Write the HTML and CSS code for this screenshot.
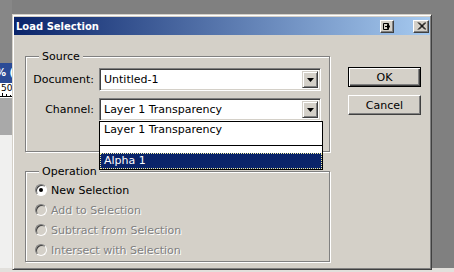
FILE: index.html
```html
<!DOCTYPE html>
<html lang="en">
<head>
    <meta charset="UTF-8">
    <title>Load Selection</title>
    <link rel="stylesheet" href="styles.css">
</head>
<body>
  <div class="screen">
    <div class="behind">
      <div class="behind-top"></div>
      <div class="behind-title">% (</div>
      <div class="behind-ruler">
        <span>50</span>
        <svg class="ticks" width="12" height="4" viewBox="0 0 12 4"><path d="M0 3.5H12M2.5 0V4M6.5 1V4M10.5 2V4" stroke="#000" stroke-width="1" fill="none"/></svg>
      </div>
      <div class="behind-panel"></div>
      <div class="behind-canvas"></div>
    </div>

    <div class="dialog">
      <div class="titlebar">
        <span class="title">Load Selection</span>
        <span class="tb-btn tb-dock">
          <svg width="8" height="7" viewBox="0 0 8 7"><path d="M0.5 0.5H5.5V6.5H0.5Z" fill="none" stroke="#000"/><path d="M2 3.5H6M4.5 1.5L7 3.5L4.5 5.5Z" stroke="#000" fill="#000"/></svg>
        </span>
        <span class="tb-btn tb-close">
          <svg width="9" height="8" viewBox="0 0 9 8"><path d="M1 0.5L8 7.5M8 0.5L1 7.5M2 0.5L9 7.5M9 0.5L2 7.5" stroke="#000" stroke-width="1"/></svg>
        </span>
      </div>

      <div class="dialog-body">
        <div class="groups">
          <fieldset class="group group-source">
            <legend>Source</legend>
            <div class="field-grid">
              <label>Document:</label>
              <div class="select">
                <span class="select-value">Untitled-1</span>
                <span class="select-arrow"><svg width="7" height="4" viewBox="0 0 7 4"><path d="M0 0H7L3.5 4Z" fill="#000"/></svg></span>
              </div>
              <label>Channel:</label>
              <div class="select">
                <span class="select-value">Layer 1 Transparency</span>
                <span class="select-arrow"><svg width="7" height="4" viewBox="0 0 7 4"><path d="M0 0H7L3.5 4Z" fill="#000"/></svg></span>
                <ul class="dropdown">
                  <li class="option">Layer 1 Transparency</li>
                  <li class="option-sep"></li>
                  <li class="option-gap"></li>
                  <li class="option selected">Alpha 1</li>
                </ul>
              </div>
            </div>
          </fieldset>

          <fieldset class="group group-operation">
            <legend>Operation</legend>
            <div class="radios">
              <div class="radio checked"><span class="radio-dot"></span>New Selection</div>
              <div class="radio disabled"><span class="radio-dot"></span>Add to Selection</div>
              <div class="radio disabled"><span class="radio-dot"></span>Subtract from Selection</div>
              <div class="radio disabled"><span class="radio-dot"></span>Intersect with Selection</div>
            </div>
          </fieldset>
        </div>

        <div class="buttons">
          <button class="btn btn-default">OK</button>
          <button class="btn">Cancel</button>
        </div>
      </div>
    </div>

    <div class="outside"></div>
  </div>
  <div class="strip"></div>
</body>
</html>
```

FILE: styles.css
```css
html, body {
  margin: 0;
  width: 454px;
  height: 272px;
  overflow: hidden;
}

body {
  background: #808080;
  font-family: "DejaVu Sans", Verdana, sans-serif;
  font-size: 11px;
  color: #000;
}

.screen {
  display: flex;
  height: 268px;
}

/* window behind the dialog, left edge */
.behind {
  width: 12px;
  display: flex;
  flex-direction: column;
  overflow: hidden;
}

.behind-top {
  height: 63px;
  background: #878787;
}

.behind-title {
  height: 20px;
  line-height: 20px;
  background: #2b4b96;
  color: #fff;
  font-weight: bold;
  font-size: 10px;
  white-space: nowrap;
  text-indent: -4px;
}

.behind-ruler {
  height: 15px;
  background: #fff;
  font-size: 9px;
  line-height: 10px;
  display: flex;
  flex-direction: column;
  padding-left: 1px;
}

.ticks {
  display: block;
  margin-left: -1px;
}

.behind-panel {
  height: 37px;
  background: #a9a9a9;
}

.behind-canvas {
  flex: 1;
  background: #f0f0ef;
}

/* dialog */
.dialog {
  margin-top: 14px;
  width: 416px;
  height: 251px;
  padding: 2px 1px 1px;
  background: #d4d0c8;
  border: 1px solid;
  border-color: #d4d0c8 #404040 #404040 #d4d0c8;
  box-shadow: inset 1px 1px #fff, inset -1px -1px #808080;
}

.titlebar {
  height: 18px;
  display: flex;
  align-items: center;
  background: linear-gradient(to right, #0a246a, #a6caf0);
  padding: 0 1px 0 1px;
}

.title {
  flex: 1;
  color: #fff;
  font-weight: bold;
  font-size: 10px;
  padding-left: 1px;
}

.tb-btn {
  height: 13px;
  box-sizing: border-box;
  display: flex;
  align-items: center;
  justify-content: center;
  background: #d4d0c8;
  border: 1px solid;
  border-color: #fff #404040 #404040 #fff;
  box-shadow: inset -1px -1px #808080;
}

.tb-dock {
  width: 14px;
  margin-right: 19px;
}

.tb-close {
  width: 16px;
}

.dialog-body {
  display: flex;
  gap: 18px;
  padding: 15px 9px 0 11px;
}

.groups {
  width: 305px;
}

.group {
  margin: 0;
  padding: 0;
  border: 1px solid #808080;
  box-shadow: inset 1px 1px #fff, 1px 1px #fff;
  min-width: 0;
}

.group legend {
  margin-left: 13px;
  padding: 0 3px;
  line-height: 13px;
  background: #d4d0c8;
}

.field-grid {
  display: grid;
  grid-template-columns: 68px 222px;
  column-gap: 5px;
  row-gap: 7px;
  align-items: center;
  padding: 5px 0 30px;
}

.field-grid label {
  text-align: right;
}

.select {
  position: relative;
  height: 23px;
  box-sizing: border-box;
  display: flex;
  align-items: center;
  background: #fff;
  border: 1px solid;
  border-color: #808080 #fff #fff #808080;
  box-shadow: inset 1px 1px #404040, inset -1px -1px #d4d0c8;
  padding: 2px 2px 2px 4px;
}

.select-value {
  flex: 1;
}

.select-arrow {
  width: 16px;
  align-self: stretch;
  box-sizing: border-box;
  display: flex;
  align-items: center;
  justify-content: center;
  background: #d4d0c8;
  border: 1px solid;
  border-color: #d4d0c8 #404040 #404040 #d4d0c8;
  box-shadow: inset 1px 1px #fff, inset -1px -1px #808080;
}

.select-arrow svg {
  display: block;
}

.dropdown {
  position: absolute;
  left: -1px;
  top: calc(100% + 1px);
  width: 224px;
  box-sizing: border-box;
  margin: 0;
  padding: 0;
  list-style: none;
  background: #fff;
  border: 1px solid #000;
  z-index: 2;
}

.option {
  height: 16px;
  line-height: 16px;
  padding-left: 4px;
}

.option-sep {
  height: 7px;
  border-bottom: 1px solid #000;
}

.option-gap {
  height: 7px;
}

.option.selected {
  background: #0a246a;
  color: #fff;
  outline: 1px dotted #f4f0a0;
  outline-offset: -1px;
}

.group-operation {
  margin-top: 13px;
}

.radios {
  padding: 2px 0 1px 9px;
}

.radio {
  height: 20px;
  display: flex;
  align-items: center;
  gap: 4px;
}

.radio-dot {
  width: 12px;
  height: 12px;
  box-sizing: border-box;
  border-radius: 50%;
  background: #fff;
  border: 1px solid;
  border-color: #808080 #fff #fff #808080;
  box-shadow: inset 1px 1px #404040;
  display: flex;
  align-items: center;
  justify-content: center;
}

.radio.checked .radio-dot::after {
  content: "";
  width: 4px;
  height: 4px;
  border-radius: 50%;
  background: #000;
}

.radio.disabled {
  color: #808080;
  text-shadow: 1px 1px #fff;
}

.radio.disabled .radio-dot {
  background: #d4d0c8;
}

.buttons {
  display: flex;
  flex-direction: column;
  gap: 8px;
  margin-top: 17px;
}

.btn {
  width: 73px;
  height: 20px;
  margin: 0;
  padding: 0;
  font: inherit;
  color: #000;
  background: #d4d0c8;
  border: 1px solid;
  border-color: #fff #404040 #404040 #fff;
  box-shadow: inset -1px -1px #808080;
}

.btn-default {
  border-color: #000;
  box-shadow: inset 1px 1px #fff, inset -1px -1px #404040, inset -2px -2px #808080;
}

.outside {
  flex: 1;
  background: #808080;
}

.strip {
  height: 4px;
  background: #e2e0dc;
}
```
